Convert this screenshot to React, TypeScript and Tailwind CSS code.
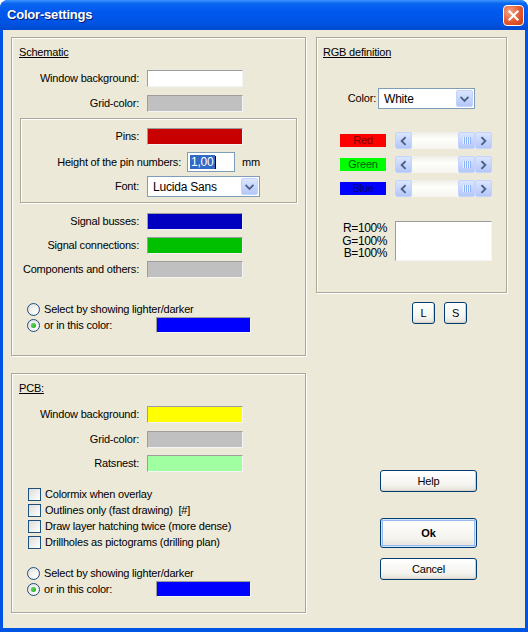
import React from "react";

const FONT = "font-['Liberation_Sans',Arial,sans-serif] text-[11px] tracking-[-0.2px] text-black";

function Swatch({ color, className = "w-[96px] h-[17px]" }: { color: string; className?: string }) {
  return (
    <div
      className={`${className} border border-t-[#9D9D9D] border-l-[#9D9D9D] border-r-[#F4F4F4] border-b-[#F4F4F4]`}
      style={{ backgroundColor: color }}
    />
  );
}

function Row({ label, labelW, gap = "gap-[8px]", children, className = "" }: {
  label: string; labelW: string; gap?: string; children: React.ReactNode; className?: string;
}) {
  return (
    <div className={`flex items-center ${gap} ${className}`}>
      <div className={`${labelW} text-right whitespace-nowrap`}>{label}</div>
      {children}
    </div>
  );
}

function Chevron({ dir }: { dir: "left" | "right" | "down" }) {
  const d =
    dir === "left" ? "M9.5 4.5 L6 8 L9.5 11.5" : dir === "right" ? "M6.5 4.5 L10 8 L6.5 11.5" : "M4.5 6.5 L8 10 L11.5 6.5";
  return (
    <svg width="16" height="16" viewBox="0 0 16 16">
      <path d={d} fill="none" stroke="#4D6185" strokeWidth="2" strokeLinecap="square" />
    </svg>
  );
}

function BlueBtn({ dir, className = "w-[17px] h-[17px]" }: { dir: "left" | "right" | "down"; className?: string }) {
  return (
    <div
      className={`${className} flex items-center justify-center rounded-[2px] border border-[#C3D3FD] bg-[linear-gradient(to_bottom,#DCE6FE,#C2D3FC_60%,#B4C8F6)]`}
    >
      <Chevron dir={dir} />
    </div>
  );
}

function ScrollBar() {
  return (
    <div className="flex w-[97px] h-[17px] bg-[linear-gradient(to_bottom,#EEEDE5,#FEFEFB_40%,#F6F5F0)]">
      <BlueBtn dir="left" />
      <div className="flex-1" />
      <div className="w-[17px] h-[17px] flex items-center justify-center gap-[1px] rounded-[2px] border border-[#C3D3FD] bg-[linear-gradient(to_bottom,#DCE6FE,#C2D3FC_60%,#B4C8F6)]">
        <div className="w-[1px] h-[7px] bg-[#EEF4FE] shadow-[1px_0_0_#8CB0F8]" />
        <div className="w-[1px] h-[7px] bg-[#EEF4FE] shadow-[1px_0_0_#8CB0F8]" />
        <div className="w-[1px] h-[7px] bg-[#EEF4FE] shadow-[1px_0_0_#8CB0F8]" />
        <div className="w-[1px] h-[7px] bg-[#EEF4FE] shadow-[1px_0_0_#8CB0F8]" />
      </div>
      <BlueBtn dir="right" />
    </div>
  );
}

function Select({ value, className }: { value: string; className: string }) {
  return (
    <div className={`${className} flex items-center border border-[#7F9DB9] bg-white p-[1px]`}>
      <div className="flex-1 pl-[4px] text-[12px]">{value}</div>
      <BlueBtn dir="down" className="w-[17px] h-full" />
    </div>
  );
}

function Radio({ checked }: { checked?: boolean }) {
  return (
    <div className="w-[13px] h-[13px] rounded-full border border-[#1C5180] bg-[radial-gradient(circle_at_65%_65%,#FFFFFF,#DCDCD7)] flex items-center justify-center shrink-0">
      {checked && <div className="w-[5px] h-[5px] rounded-full bg-[radial-gradient(circle_at_35%_35%,#55D655,#21A121)]" />}
    </div>
  );
}

function Check({ label }: { label: string }) {
  return (
    <div className="flex items-center h-[16px] pl-[16px] gap-[4px]">
      <div className="w-[13px] h-[13px] border border-[#1C5180] bg-[linear-gradient(135deg,#DCDCD7,#FFFFFF)] shrink-0" />
      <span className="whitespace-pre">{label}</span>
    </div>
  );
}

function RadioPair({ className = "" }: { className?: string }) {
  return (
    <div className={className}>
      <div className="flex items-center h-[14px] pl-[15px] gap-[4px]">
        <Radio />
        <span className="whitespace-nowrap">Select by showing lighter/darker</span>
      </div>
      <div className="flex items-center h-[16px] pl-[15px] gap-[4px] mt-[1px]">
        <Radio checked />
        <span className="w-[108px] whitespace-nowrap">or in this color:</span>
        <Swatch color="#0000FF" className="w-[95px] h-[16px]" />
      </div>
    </div>
  );
}

function XpButton({ label, className, def }: { label: string; className: string; def?: boolean }) {
  return (
    <div
      className={`${className} flex items-center justify-center rounded-[3px] border border-[#003C74] bg-[linear-gradient(to_bottom,#FFFFFF,#F4F3EE_70%,#E3E1D7)] ${
        def ? "shadow-[inset_0_0_0_1px_#CEE7FF,inset_0_0_0_2px_#97B9EE] font-bold" : "shadow-[inset_-1px_-1px_0_#D6D0C5]"
      }`}
    >
      {label}
    </div>
  );
}

const PANEL = "border border-[#ACA899] shadow-[inset_1px_1px_0_#FFFFFF,1px_1px_0_#FFFFFF]";

export default function App() {
  return (
    <div className={`w-[528px] h-[632px] flex flex-col bg-[#0054E3] rounded-t-[8px] overflow-hidden ${FONT}`}>
      {/* Title bar */}
      <div className="h-[30px] shrink-0 flex items-center justify-between pl-[7px] pr-[4px] bg-[linear-gradient(to_bottom,#3D95FF_0%,#0A66F0_12%,#0058EE_40%,#0054E3_75%,#0049CF_100%)]">
        <span className="font-['Liberation_Sans',Arial,sans-serif] font-bold text-[13px] tracking-[-0.2px] text-white [text-shadow:1px_1px_0_#0A1E6E]">
          Color-settings
        </span>
        <div className="w-[21px] h-[21px] rounded-[4px] border border-white bg-[radial-gradient(circle_at_30%_30%,#F4A486,#E5582F_55%,#C43E16)] flex items-center justify-center">
          <svg width="13" height="13" viewBox="0 0 13 13">
            <path d="M2.5 2.5 L10.5 10.5 M10.5 2.5 L2.5 10.5" stroke="white" strokeWidth="2.2" strokeLinecap="square" />
          </svg>
        </div>
      </div>

      {/* Client area */}
      <div className="flex-1 mx-[3px] mb-[4px] bg-[#ECE9D8] flex">
        {/* Left column */}
        <div className="pl-[8px] pt-[7px] flex flex-col gap-[17px]">
          {/* Schematic */}
          <div className={`w-[295px] h-[319px] ${PANEL}`}>
            <div className="mt-[7px] pl-[7px] h-[14px] leading-[14px]">
              <span className="underline">Schematic</span>
            </div>
            <Row label="Window background:" labelW="w-[127px]" className="mt-[11px] h-[17px]">
              <Swatch color="#FFFFFF" />
            </Row>
            <Row label="Grid-color:" labelW="w-[127px]" className="mt-[8px] h-[17px]">
              <Swatch color="#C0C0C0" />
            </Row>
            <div className={`ml-[8px] mt-[6px] w-[277px] h-[85px] ${PANEL}`}>
              <Row label="Pins:" labelW="w-[118px]" className="mt-[9px] h-[17px]">
                <Swatch color="#C80000" />
              </Row>
              <Row label="Height of the pin numbers:" labelW="w-[160px]" gap="gap-[6px]" className="mt-[7px] h-[20px]">
                <div className="w-[48px] h-[20px] border border-[#7F9DB9] bg-white flex items-center pl-[2px]">
                  <span className="bg-[#316AC5] text-white text-[12px] leading-[14px] px-[1px]">1,00</span>
                  <div className="w-[1px] h-[13px] bg-black" />
                </div>
                <span className="ml-[1px]">mm</span>
              </Row>
              <Row label="Font:" labelW="w-[118px]" className="mt-[4px] h-[21px]">
                <Select value="Lucida Sans" className="w-[113px] h-[21px]" />
              </Row>
            </div>
            <Row label="Signal busses:" labelW="w-[127px]" className="mt-[10px] h-[17px]">
              <Swatch color="#0000C0" />
            </Row>
            <Row label="Signal connections:" labelW="w-[127px]" className="mt-[7px] h-[17px]">
              <Swatch color="#00C000" />
            </Row>
            <Row label="Components and others:" labelW="w-[127px]" className="mt-[7px] h-[17px]">
              <Swatch color="#C0C0C0" />
            </Row>
            <RadioPair className="mt-[24px]" />
          </div>

          {/* PCB */}
          <div className={`w-[295px] h-[240px] ${PANEL}`}>
            <div className="mt-[7px] pl-[7px] h-[14px] leading-[14px]">
              <span className="underline">PCB:</span>
            </div>
            <Row label="Window background:" labelW="w-[127px]" className="mt-[11px] h-[17px]">
              <Swatch color="#FFFF00" />
            </Row>
            <Row label="Grid-color:" labelW="w-[127px]" className="mt-[8px] h-[17px]">
              <Swatch color="#C0C0C0" />
            </Row>
            <Row label="Ratsnest:" labelW="w-[127px]" className="mt-[7px] h-[17px]">
              <Swatch color="#A0FFA0" />
            </Row>
            <div className="mt-[14px]">
              <Check label="Colormix when overlay" />
              <Check label="Outlines only (fast drawing)  [#]" />
              <Check label="Draw layer hatching twice (more dense)" />
              <Check label="Drillholes as pictograms (drilling plan)" />
            </div>
            <RadioPair className="mt-[16px]" />
          </div>
        </div>

        {/* Right column */}
        <div className="pl-[10px] pt-[7px] flex flex-col">
          <div className={`w-[191px] h-[256px] ${PANEL}`}>
            <div className="mt-[7px] pl-[6px] h-[14px] leading-[14px]">
              <span className="underline">RGB definition</span>
            </div>
            <Row label="Color:" labelW="w-[59px]" gap="gap-[2px]" className="mt-[29px] h-[21px]">
              <Select value="White" className="w-[97px] h-[21px]" />
            </Row>
            <div className="mt-[23px] flex flex-col gap-[7px]">
              {[
                ["Red", "bg-[#FF0000] text-[#800000]"],
                ["Green", "bg-[#00FF00] text-[#006000]"],
                ["Blue", "bg-[#0000FF] text-[#000080]"],
              ].map(([name, cls]) => (
                <div key={name} className="flex items-center h-[17px] pl-[22px] gap-[8px]">
                  <div className={`w-[48px] h-[15px] flex items-center justify-center border border-[#ECE9D8] ${cls}`}>
                    {name}
                  </div>
                  <ScrollBar />
                </div>
              ))}
            </div>
            <div className="mt-[24px] flex pl-[22px] gap-[8px]">
              <div className="w-[48px] text-right leading-[12.5px] pt-[1px] text-[12px] tracking-[-0.4px]">
                <div>R=100%</div>
                <div>G=100%</div>
                <div>B=100%</div>
              </div>
              <div className="w-[97px] h-[40px] bg-white border border-t-[#9D9D9D] border-l-[#9D9D9D] border-r-[#F4F4F4] border-b-[#F4F4F4]" />
            </div>
          </div>
          <div className="mt-[9px] ml-[96px] flex gap-[9px]">
            <XpButton label="L" className="w-[23px] h-[22px]" />
            <XpButton label="S" className="w-[23px] h-[22px]" />
          </div>
          <div className="ml-[64px] mt-[146px] flex flex-col">
            <XpButton label="Help" className="w-[97px] h-[22px]" />
            <XpButton label="Ok" def className="w-[97px] h-[30px] mt-[26px]" />
            <XpButton label="Cancel" className="w-[97px] h-[22px] mt-[10px]" />
          </div>
        </div>
      </div>
    </div>
  );
}
